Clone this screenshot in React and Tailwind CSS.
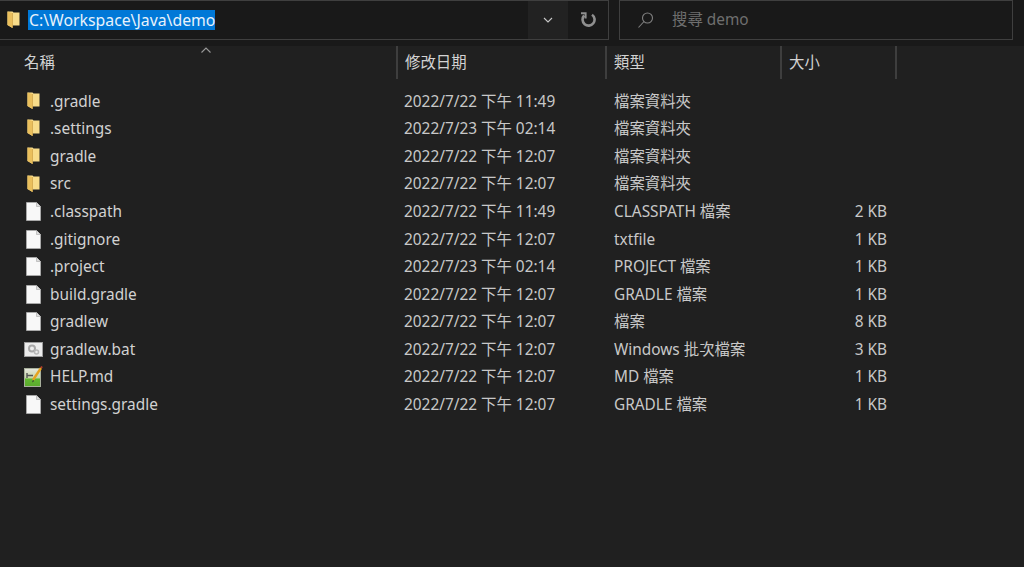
import React from "react";

const FONT = "font-['Noto_Sans','Noto_Sans_CJK_TC',sans-serif]";

const files = [
    { name: ".gradle", date: "2022/7/22 下午 11:49", type: "檔案資料夾", size: "", icon: "folder" },
    { name: ".settings", date: "2022/7/23 下午 02:14", type: "檔案資料夾", size: "", icon: "folder" },
    { name: "gradle", date: "2022/7/22 下午 12:07", type: "檔案資料夾", size: "", icon: "folder" },
    { name: "src", date: "2022/7/22 下午 12:07", type: "檔案資料夾", size: "", icon: "folder" },
    { name: ".classpath", date: "2022/7/22 下午 11:49", type: "CLASSPATH 檔案", size: "2 KB", icon: "file" },
    { name: ".gitignore", date: "2022/7/22 下午 12:07", type: "txtfile", size: "1 KB", icon: "file" },
    { name: ".project", date: "2022/7/23 下午 02:14", type: "PROJECT 檔案", size: "1 KB", icon: "file" },
    { name: "build.gradle", date: "2022/7/22 下午 12:07", type: "GRADLE 檔案", size: "1 KB", icon: "file" },
    { name: "gradlew", date: "2022/7/22 下午 12:07", type: "檔案", size: "8 KB", icon: "file" },
    { name: "gradlew.bat", date: "2022/7/22 下午 12:07", type: "Windows 批次檔案", size: "3 KB", icon: "bat" },
    { name: "HELP.md", date: "2022/7/22 下午 12:07", type: "MD 檔案", size: "1 KB", icon: "md" },
    { name: "settings.gradle", date: "2022/7/22 下午 12:07", type: "GRADLE 檔案", size: "1 KB", icon: "file" },
];

const FolderIcon = () => (
    <svg width="13" height="19" viewBox="0 0 13 19" className="shrink-0">
        <path d="M0.5 0.5h5l1 1h6v13h-7v2.5l-5-3z" fill="#f8dc8a" />
        <path d="M0.5 0.5l5 1.5v15l-5-3z" fill="#eabf5c" />
        <path d="M5.5 2v15" stroke="#c99a3f" strokeWidth="0.6" />
    </svg>
);

const FileIcon = () => (
    <svg width="15" height="19" viewBox="0 0 15 19" className="shrink-0">
        <path d="M0.5 0.5h10l4 4v14H0.5z" fill="#f8f8f8" stroke="#b0b0b0" strokeWidth="0.8" />
        <path d="M10.5 0.5v4h4" fill="#dcdcdc" stroke="#b0b0b0" strokeWidth="0.7" />
    </svg>
);

const BatIcon = () => (
    <svg width="19" height="15" viewBox="0 0 19 15" className="shrink-0">
        <rect x="0.5" y="0.5" width="18" height="14" fill="#ececec" stroke="#9e9e9e" />
        <circle cx="8" cy="6.5" r="3" fill="none" stroke="#a8a8a8" strokeWidth="2" />
        <circle cx="12.5" cy="10" r="2" fill="none" stroke="#b8b8b8" strokeWidth="1.5" />
    </svg>
);

const MdIcon = () => (
    <svg width="20" height="21" viewBox="0 0 20 21" className="shrink-0">
        <defs>
            <linearGradient id="mdBody" x1="0" y1="0" x2="0" y2="1">
                <stop offset="0" stopColor="#e6e6df" />
                <stop offset="0.5" stopColor="#c8d8a8" />
                <stop offset="0.6" stopColor="#62b832" />
                <stop offset="1" stopColor="#5aa82c" />
            </linearGradient>
        </defs>
        <rect x="0.5" y="2.5" width="16" height="18" fill="url(#mdBody)" stroke="#a8b09c" />
        <path d="M3 7v5M3 9.5h6" stroke="#555555" strokeWidth="1.4" fill="none" />
        <path d="M9 14L17 2" stroke="#e6a31e" strokeWidth="2.4" />
        <path d="M17 2l1-1.5" stroke="#b03a2a" strokeWidth="2" />
        <path d="M9 14l-1 2.5 2.2-1.4z" fill="#333333" />
    </svg>
);

const icons = { folder: FolderIcon, file: FileIcon, bat: BatIcon, md: MdIcon };

const App = () => {
    return (
        <div className={`w-[1024px] h-[567px] overflow-hidden bg-[#202020] text-[#d2d2d2] text-[15.4px] ${FONT}`}>
            {/* address bar + search */}
            <div className="flex h-[46px] bg-[#191919] pb-[6px]">
                <div className="flex w-[609px] items-stretch border-y border-r border-[#3f3f3f] bg-[#191919]">
                    <div className="flex flex-1 items-center pl-[7px]">
                        <FolderIcon />
                        <span className="ml-[8px] bg-[#0078d7] pl-[1px] text-[15.8px] leading-[20px] text-[#e8f2fb]">C:\Workspace\Java\demo</span>
                    </div>
                    <div className="flex w-[40px] items-center justify-center bg-[#222222]">
                        <svg width="12" height="12" viewBox="0 0 12 12" fill="none" stroke="#c8c8c8" strokeWidth="1.1">
                            <path d="M2 4l4 4 4-4" />
                        </svg>
                    </div>
                    <div className="flex w-[40px] items-center justify-center">
                        <svg width="16" height="16" viewBox="0 0 16 16" fill="none" stroke="#8f8f8f" strokeWidth="2.6">
                            <path d="M4.2 3.5A6 6 0 1 0 12 2.7" />
                            <path d="M1 1.3h4.6v5.2" strokeWidth="2" />
                        </svg>
                    </div>
                </div>
                <div className="ml-[10px] flex w-[394px] items-center border border-[#3f3f3f] pl-[17px] text-[#6f6f6f]">
                    <svg width="18" height="18" viewBox="0 0 18 18" fill="none" stroke="#808080" strokeWidth="1.1">
                        <circle cx="10.5" cy="7" r="5" />
                        <path d="M7 10.5L1.5 16.5" />
                    </svg>
                    <span className="ml-[17px] pb-[1px]">搜尋 demo</span>
                </div>
            </div>

            {/* column header */}
            <div className="relative flex h-[33px] items-center">
                <span className="absolute left-[201px] top-[1px]">
                    <svg width="10" height="6" viewBox="0 0 10 6" fill="none" stroke="#9a9a9a" strokeWidth="1.1" className="block">
                        <path d="M0.5 5.5l4.5-4.5 4.5 4.5" />
                    </svg>
                </span>
                <div className="w-[396px] pl-[24px]">名稱</div>
                <div className="h-full w-[209px] border-l-2 border-[#3e3e3e] pl-[7px] leading-[33px]">修改日期</div>
                <div className="h-full w-[175px] border-l-2 border-[#3e3e3e] pl-[7px] leading-[33px]">類型</div>
                <div className="h-full w-[117px] border-x-2 border-[#3e3e3e] pl-[7px] leading-[33px]">大小</div>
            </div>

            {/* file rows */}
            <div className="pt-[8.6px]">
                {files.map((f) => {
                    const Icon = icons[f.icon];
                    return (
                        <div key={f.name} className="flex h-[27.55px] items-center">
                            <div className="flex w-[396px] items-center">
                                <div className="flex w-[50px] justify-center pl-[19px] pr-[2px]">
                                    <Icon />
                                </div>
                                <span>{f.name}</span>
                            </div>
                            <div className="w-[209px] pl-[8px] text-[#c8c8c8]">{f.date}</div>
                            <div className="w-[175px] pl-[9px] text-[#c8c8c8]">{f.type}</div>
                            <div className="w-[107px] text-right text-[#c8c8c8]">{f.size}</div>
                        </div>
                    );
                })}
            </div>
        </div>
    );
};

export default App;
